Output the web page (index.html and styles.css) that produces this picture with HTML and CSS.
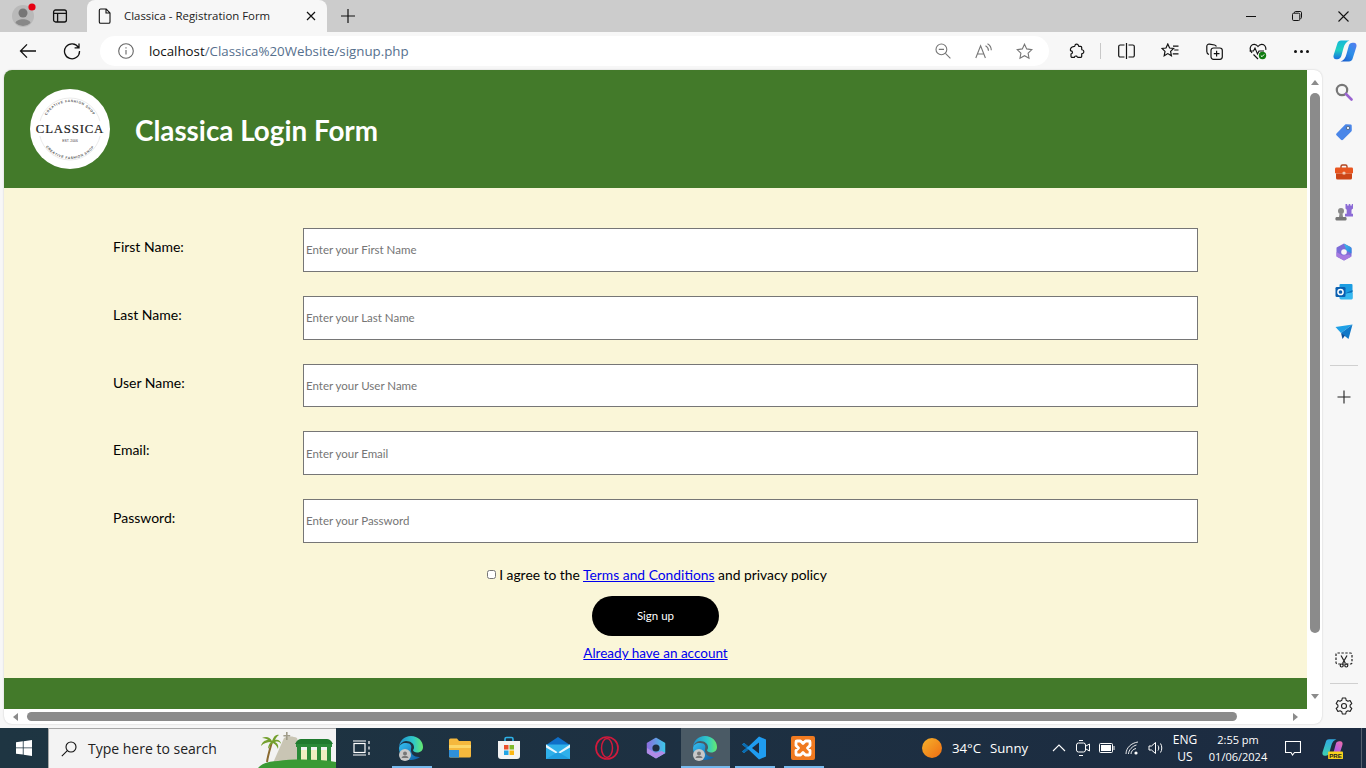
FILE: index.html
```html
<!DOCTYPE html>
<html lang="en">

<head>
  <meta charset="UTF-8" />
  <title>Classica - Registration Form</title>
  <link rel="stylesheet" href="styles.css">
</head>

<body>
  <!-- tab strip -->
  <div class="tabstrip">
    <div class="strip-btn first">
      <svg width="28" height="28" viewBox="0 0 28 28"><circle cx="14" cy="14" r="11" fill="#b9b9b9"/><circle cx="14" cy="11" r="4.5" fill="#777"/><path d="M6.5 21c1-5 14-5 15 0a11 11 0 0 1-15 0z" fill="#888"/><circle cx="23" cy="5" r="3.6" fill="#e60012"/></svg>
    </div>
    <div class="strip-btn">
      <svg width="16" height="16" viewBox="0 0 16 16" fill="none" stroke="#111" stroke-width="1.3"><rect x="1.6" y="2" width="12.8" height="12" rx="2"/><path d="M1.6 5.4h12.8M5.6 5.4V14"/></svg>
    </div>
    <div class="tab">
      <svg width="14" height="16" viewBox="0 0 14 16" fill="none" stroke="#111" stroke-width="1.1"><path d="M2.6 1h5.6L12 4.9v9a1.3 1.3 0 0 1-1.3 1.3H2.6a1.3 1.3 0 0 1-1.3-1.3V2.3A1.3 1.3 0 0 1 2.6 1zM8 1v4h4"/></svg>
      <span class="tab-title">Classica - Registration Form</span>
      <svg width="10" height="10" viewBox="0 0 10 10" stroke="#111" stroke-width="1.2"><path d="M1 1l8 8M9 1l-8 8"/></svg>
    </div>
    <div class="strip-btn plus">
      <svg width="16" height="16" viewBox="0 0 16 16" stroke="#111" stroke-width="1.2"><path d="M8 1v14M1 8h14"/></svg>
    </div>
    <div class="win-btns">
      <div class="win-btn"><svg width="10" height="10" viewBox="0 0 10 10" stroke="#111"><path d="M0 5.5h10"/></svg></div>
      <div class="win-btn"><svg width="10" height="10" viewBox="0 0 10 10" fill="none" stroke="#111"><rect x=".5" y="2.2" width="7.3" height="7.3" rx="1.2"/><path d="M2.5 2V1.5A1 1 0 0 1 3.5.5h4.8a1.2 1.2 0 0 1 1.2 1.2v4.8a1 1 0 0 1-1 1"/></svg></div>
      <div class="win-btn"><svg width="11" height="11" viewBox="0 0 11 11" stroke="#111" stroke-width="1.1"><path d="M.5.5l10 10M10.500.5l-10 10"/></svg></div>
    </div>
  </div>

  <!-- toolbar -->
  <div class="toolbar">
    <div class="tool-btn">
      <svg width="18" height="18" viewBox="0 0 18 18" fill="none" stroke="#111" stroke-width="1.3"><path d="M17 9H1.5M8 2.4L1.5 9 8 15.6"/></svg>
    </div>
    <div class="tool-btn">
      <svg width="18" height="18" viewBox="0 0 18 18" fill="none" stroke="#111" stroke-width="1.3"><path d="M15.4 5.4A7.5 7.5 0 1 0 16.5 9M16 1.5v4.4h-4.4"/></svg>
    </div>
    <div class="omnibox">
      <svg class="omni-info" width="16" height="16" viewBox="0 0 16 16" fill="none" stroke="#666" stroke-width="1.1"><circle cx="8" cy="8" r="7.3"/><path d="M8 7v4.6M8 4.2v1.2"/></svg>
      <span class="url"><b>localhost</b>/Classica%20Website/signup.php</span>
      <div class="omni-icons">
        <svg width="16" height="16" viewBox="0 0 16 16" fill="none" stroke="#777" stroke-width="1.1"><circle cx="6.4" cy="6.4" r="5.4"/><path d="M3.8 6.4h5.2M10.4 10.4l5 5"/></svg>
        <svg width="17" height="16" viewBox="0 0 17 16" fill="none" stroke="#777" stroke-width="1.1"><path d="M.8 15L5.6 2.800 10.400 15M2.500 11h6.200M10.500 2.800c1.800.9 2.900 2.700 3 4.900M12.500.8c2.300 1.300 3.700 3.700 3.800 6.400"/></svg>
        <svg width="17" height="17" viewBox="0 0 17 17" fill="none" stroke="#777" stroke-width="1.1"><path d="M8.5 1.2l2.2 4.7 5.1.7-3.7 3.5.9 5.1-4.5-2.5L4 15.2l.9-5.1L1.2 6.6l5.1-.7z"/></svg>
      </div>
    </div>
    <div class="tool-btn ext">
      <svg width="16" height="16" viewBox="0 0 16 16" fill="none" stroke="#111" stroke-width="1.2"><path d="M6 2.400C6 1 9 .6 9.400 2.400c0 .6.300 1 1 1h1.300a1 1 0 0 1 1 1v1.800c0 .6.500.8 1 .8 1.500.2 1.500 3.200 0 3.400-.5 0-1 .2-1 .8v2a1.200 1.200 0 0 1-1.200 1.200H9c-.8 0-.8-1-1.500-1.300-1-.4-2 .3-2.200 1.300H3.200A1.200 1.200 0 0 1 2 13.200V11c.8-.2 1.500-.8 1.500-1.700S2.800 7.800 1.500 7.600C1 5.500 2.500 3.800 4.500 3.600 5.400 3.500 6 3.200 6 2.400z"/></svg>
    </div>
    <div class="tool-sep"></div>
    <div class="tool-btn">
      <svg width="17" height="16" viewBox="0 0 17 16" fill="none" stroke="#111" stroke-width="1.2"><path d="M6.500 2H2.200A1.500 1.500 0 0 0 .7 3.500v9A1.500 1.500 0 0 0 2.200 14h4.300M10.500 2h4.300a1.500 1.500 0 0 1 1.500 1.500v9a1.500 1.500 0 0 1-1.500 1.500h-4.300M8.500 0v16"/></svg>
    </div>
    <div class="tool-btn">
      <svg width="18" height="16" viewBox="0 0 18 16" fill="none" stroke="#111" stroke-width="1.2"><path d="M6.800 1l1.800 4 4 .5-3 2.900.8 4.300-3.600-2.100-3.600 2.100.8-4.300-3-2.900 4-.5zM12 3.200h5.500M13.200 7h4.300M11.800 10.800h5.700"/></svg>
    </div>
    <div class="tool-btn">
      <svg width="17" height="17" viewBox="0 0 17 17" fill="none" stroke="#111" stroke-width="1.2"><path d="M3 11.500C1.500 11 .8 10 .8 8.500V3.300C.8 1.800 2 1 3.400 1.200l5.200.8c.9.200 1.500.7 1.800 1.500"/><rect x="5" y="5" width="11.300" height="11.300" rx="2.500"/><path d="M10.600 7.800v5.700M7.800 10.600h5.700"/></svg>
    </div>
    <div class="tool-btn">
      <svg width="18" height="18" viewBox="0 0 18 18" fill="none"><path d="M3 11C1 8.500.7 6 2 4c1.700-2.300 5-2 7 .5 2-2.500 5.300-2.800 7-.5.800 1.200 1 2.500.7 3.800M4.500 12.500L9 17" stroke="#111" stroke-width="1.200"/><path d="M.5 9h4l1.500-3 2.500 6 1.500-3h5" stroke="#111" stroke-width="1.100"/><circle cx="13.500" cy="13.500" r="3.700" fill="#0f7b0f"/><path d="M11.800 13.500l1.200 1.200 2.200-2.300" stroke="#fff"/></svg>
    </div>
    <div class="tool-btn more">
      <span class="dot"></span><span class="dot"></span><span class="dot"></span>
    </div>
    <div class="tool-btn last">
      <svg width="24" height="24" viewBox="0 0 24 24"><defs><linearGradient id="cpa" x1="0" y1="0" x2="0" y2="1"><stop offset="0" stop-color="#16b8d8"/><stop offset=".5" stop-color="#1fd0c0"/><stop offset="1" stop-color="#1a6fe0"/></linearGradient><linearGradient id="cpb" x1="0" y1="1" x2="1" y2="0"><stop offset="0" stop-color="#1553c8"/><stop offset=".55" stop-color="#2c8fe8"/><stop offset="1" stop-color="#5a7cf0"/></linearGradient></defs><path d="M8 1.500h8.500C13.500 2.500 11.500 5 10.500 9l-2.200 8c-.5 2-2 3.200-4 3.200H3.200C1 20.200 0 18.200.6 16.200L4.500 4C5 2.500 6.300 1.500 8 1.500z" fill="url(#cpa)"/><path d="M16 22.500H7.500c3-1 5-3.500 6-7.500l2.200-8c.5-2 2-3.200 4-3.200h1.100c2.200 0 3.200 2 2.600 4L19.500 20c-.5 1.500-1.800 2.500-3.500 2.500z" fill="url(#cpb)"/></svg>
    </div>
  </div>

  <div class="main">
    <div class="card">
      <div class="card-top">
        <!-- the page itself -->
        <div class="page">
          <div class="header">
            <svg class="logo" width="80" height="80" viewBox="0 0 80 80">
              <defs>
                <path id="arc-top" d="M13 40a27 27 0 0 1 54 0"/>
                <path id="arc-bot" d="M10 40a30 30 0 0 0 60 0"/>
              </defs>
              <circle cx="40" cy="40" r="40" fill="#fff"/>
              <circle cx="40" cy="40" r="31" fill="none" stroke="#ccc" stroke-width=".4"/>
              <text class="logo-small"><textPath href="#arc-top" startOffset="50%" text-anchor="middle">CREATIVE FASHION SHOP</textPath></text>
              <text class="logo-small"><textPath href="#arc-bot" startOffset="50%" text-anchor="middle">CREATIVE FASHION SHOP</textPath></text>
              <rect x="3" y="32" width="74" height="15" fill="#fff"/>
              <text class="logo-name" x="40" y="44" text-anchor="middle">CLASSICA</text>
              <text class="logo-est" x="40" y="53" text-anchor="middle">EST. 2006</text>
            </svg>
            <h1>Classica Login Form</h1>
          </div>

          <form class="form">
            <div class="row">
              <label for="fname">First Name:</label>
              <input type="text" id="fname" placeholder="Enter your First Name">
            </div>
            <div class="row">
              <label for="lname">Last Name:</label>
              <input type="text" id="lname" placeholder="Enter your Last Name">
            </div>
            <div class="row">
              <label for="uname">User Name:</label>
              <input type="text" id="uname" placeholder="Enter your User Name">
            </div>
            <div class="row">
              <label for="email">Email:</label>
              <input type="text" id="email" placeholder="Enter your Email">
            </div>
            <div class="row">
              <label for="pass">Password:</label>
              <input type="text" id="pass" placeholder="Enter your Password">
            </div>
            <div class="agree">
              <input type="checkbox" id="agree">
              <span>I agree to the <a href="#">Terms and Conditions</a> and privacy policy</span>
            </div>
            <button type="button" class="signup">Sign up</button>
            <a class="have" href="#">Already have an account</a>
          </form>

          <div class="footer"></div>
        </div>

        <div class="vscroll">
          <span class="arrow-up"></span>
          <div class="vthumb"></div>
          <span class="arrow-down"></span>
        </div>
      </div>
      <div class="hscroll">
        <span class="arrow-left"></span>
        <div class="hthumb"></div>
        <span class="arrow-right"></span>
      </div>
    </div>

    <!-- edge sidebar -->
    <div class="sidebar">
      <div class="side-top">
        <div class="side-btn"><svg width="18" height="18" viewBox="0 0 18 18" fill="none"><circle cx="7" cy="7" r="5.200" stroke="#777" stroke-width="2.200"/><path d="M11 11l5.500 5.500" stroke="#9a63d0" stroke-width="2.600" stroke-linecap="round"/></svg></div>
        <div class="side-btn"><svg width="18" height="18" viewBox="0 0 18 18"><path d="M1.500 10.500L10 1.800c.4-.4.800-.5 1.300-.5l4.500.2c.5 0 .9.400.9.900l.1 4.800c0 .5-.2.900-.5 1.200L8 16.700c-.6.600-1.400.6-2 0l-4.500-4.400c-.5-.5-.5-1.300 0-1.800z" fill="#4a86e8"/><circle cx="13" cy="5" r="1.700" fill="#dfe8f8" stroke="#345" stroke-width=".6"/></svg></div>
        <div class="side-btn"><svg width="18" height="16" viewBox="0 0 18 16"><path d="M6 4V2.500A1.500 1.500 0 0 1 7.500 1h3A1.500 1.500 0 0 1 12 2.500V4" fill="none" stroke="#b0431d" stroke-width="1.400"/><rect y="3.500" width="18" height="6" rx="1.200" fill="#e8551f"/><path d="M1 9.500h16V14a1.500 1.500 0 0 1-1.500 1.500h-13A1.500 1.500 0 0 1 1 14z" fill="#cc4517"/><rect x="7.600" y="7.800" width="2.800" height="2.800" rx=".6" fill="#f3c9b0"/></svg></div>
        <div class="side-btn"><svg width="18" height="18" viewBox="0 0 18 18"><circle cx="6" cy="8" r="3" fill="#8a8a8a"/><path d="M4.500 10.500h3L8 14H4z" fill="#8a8a8a"/><rect x=".5" y="14" width="11" height="3.500" rx="1.200" fill="#777"/><path d="M10.500 1h1.700v1.500h1.500V1h1.600v1.500h1.500V1h1.200v4.500l-1.500 1.300v4h1.500v2.700H10v-2.700h1.700v-4L10.500 5.500z" fill="#8c6bd6"/></svg></div>
        <div class="side-btn"><svg width="18" height="18" viewBox="0 0 18 18"><defs><linearGradient id="mb" x1="0" y1="0" x2="1" y2="1"><stop offset="0" stop-color="#39c0e8"/><stop offset="1" stop-color="#2f7fe0"/></linearGradient></defs><path d="M9 1.500l6.500 3.700v7.600L9 16.500l-6.500-3.700V5.200z" fill="#7d6cd8" stroke="#7d6cd8" stroke-width="2" stroke-linejoin="round"/><path d="M9 .8l6.500 3.200 1 1.500v5L11 7.500c0-2-1-4-2-6.700z" fill="url(#mb)"/><path d="M1.500 9l6 3.500 6.500-1 2.500 2L9 17.500 1.500 13.500z" fill="#a77be0"/><circle cx="9" cy="9" r="2.800" fill="#f7f7f7"/></svg></div>
        <div class="side-btn"><svg width="18" height="18" viewBox="0 0 18 18"><rect x="4.500" y="1" width="13" height="15" rx="1" fill="#1b9de2"/><path d="M5 10h12.500v5.500a1 1 0 0 1-1 1H6a1 1 0 0 1-1-1z" fill="#35b8f0"/><path d="M9 11l8.500-4v2z" fill="#0c6fb8"/><rect x=".5" y="4" width="10" height="10" rx="1.300" fill="#0a5fb0"/><circle cx="5.500" cy="9" r="2.600" fill="none" stroke="#fff" stroke-width="1.500"/></svg></div>
        <div class="side-btn"><svg width="18" height="16" viewBox="0 0 18 16"><path d="M.5 3L17.500.5 6 9z" fill="#1ea0e6"/><path d="M17.500.5L13.500 15 6 9z" fill="#0f78c8"/><path d="M6 9l1.500 6 2.500-3.500z" fill="#0b4f9a"/></svg></div>
        <div class="side-sep"></div>
        <div class="side-btn plus-btn"><svg width="14" height="14" viewBox="0 0 14 14" stroke="#222" stroke-width="1.100"><path d="M7 .5v13M.5 7h13"/></svg></div>
      </div>
      <div class="side-bottom">
        <div class="side-btn small"><svg width="18" height="16" viewBox="0 0 18 16" fill="none" stroke="#222" stroke-width="1.200"><rect x="1" y="1" width="16" height="11" rx="1.500" stroke-dasharray="2.400 1.500"/><path d="M6 3.500l4.500 8M12 3.500l-4.500 8"/><circle cx="6.700" cy="13.500" r="1.500"/><circle cx="11.300" cy="13.500" r="1.500"/></svg></div>
        <div class="side-sep bottom"></div>
        <div class="side-btn small"><svg width="18" height="18" viewBox="0 0 18 18" fill="none" stroke="#222" stroke-width="1.100"><path d="M7.300 1h3.400l.5 2.300 1.700 1 2.200-.7 1.700 2.900-1.700 1.600v1.800l1.700 1.600-1.700 2.900-2.200-.7-1.700 1-.5 2.300H7.300l-.5-2.300-1.700-1-2.200.7-1.700-2.900 1.700-1.600V8.100L1.200 6.500l1.700-2.900 2.200.7 1.700-1z" stroke-linejoin="round"/><circle cx="9" cy="9" r="2.500"/></svg></div>
      </div>
    </div>
  </div>

  <!-- windows taskbar -->
  <div class="taskbar">
    <div class="start">
      <svg width="16" height="16" viewBox="0 0 16 16" fill="#fff"><path d="M0 2.300l6.800-1v6.200H0zM7.600 1.200L16 0v7.500H7.600zM0 8.300h6.800v6.300L0 13.700zM7.600 8.300H16V16l-8.400-1.200z"/></svg>
    </div>
    <div class="search">
      <svg width="16" height="16" viewBox="0 0 16 16" fill="none" stroke="#111" stroke-width="1.100"><circle cx="10" cy="6" r="5"/><path d="M6.300 9.700L.8 15.200"/></svg>
      <span class="search-text">Type here to search</span>
      <svg class="search-art" width="78" height="39" viewBox="0 0 78 39">
        <path d="M15 34l11-25c4-2 9-2 13 0l7 25z" fill="#c9c5b4"/>
        <path d="M28 3h1.600v3h2.600v1.400h-2.600V11H28V7.400h-2.600V6H28z" fill="#a09c8a"/>
        <path d="M9 33c1-7 3-13 5-20" fill="none" stroke="#8a6a30" stroke-width="2"/>
        <path d="M14 12C12 8 8 7 4 9c3 0 5 1 6 2-3 0-6 2-7 6 3-3 6-4 10-4-2 2-3 4-3 7 2-3 3-5 5-6 2 1 4 3 5 6 1-4-1-6-3-7 3-1 5 0 6 2 0-3-3-5-6-4 1-2 2-4 4-5-3-1-5 1-7 6z" fill="#74a02e"/>
        <path d="M37 15c2-4 4-5 6-5h26c2 0 4 1 6 5z" fill="#1f7a2e"/>
        <path d="M38 15h36v3H38z" fill="#2a8a38"/>
        <path d="M39 18h4v17h-4zM49 18h4v17h-4zM59 18h4v17h-4zM69 18h4v17h-4z" fill="#2a8a38"/>
        <path d="M43 21h6v14h-6zM53 21h6v14h-6zM63 21h6v14h-6z" fill="#f0eec0"/>
        <path d="M0 39c4-5 12-7 20-7 14-2 40-2 58 1v6z" fill="#3a9a34"/>
      </svg>
    </div>
    <div class="task-item">
      <svg width="18" height="16" viewBox="0 0 18 16" fill="none" stroke="#fff" stroke-width="1.200"><rect x="1" y="3.500" width="11" height="9"/><path d="M0 1h13M0 15h13M16 1v3M16 6.500v3M16 12v3"/></svg>
    </div>
    <div class="task-item running">
      <svg width="26" height="26" viewBox="0 0 26 26"><defs><linearGradient id="ed" x1="0" y1="0" x2="1" y2="1"><stop offset="0" stop-color="#35c1f1"/><stop offset="1" stop-color="#0c59a4"/></linearGradient><linearGradient id="eg" x1="0" y1="0" x2="1" y2="0"><stop offset="0" stop-color="#1f8ed0"/><stop offset=".6" stop-color="#2fc8c8"/><stop offset="1" stop-color="#66eb6e"/></linearGradient></defs><path d="M1 13C1 6 6 1 13 1c7 0 12 5 12 11 0 3-2 5.500-6 5.500-2 0-4-1-4-2.500 1-1 1-2 1-3 0-3-3-6-8-6C5 6 1.500 9 1 13z" fill="url(#eg)"/><path d="M1 13c.5-3 3-5 7-5 5 0 6 3 5 6-.5 5 3 8 8 8 .6 0 1 .2.5.5C19 24 16 25 13 25 6 25 1 20 1 13z" fill="url(#ed)"/><circle cx="7" cy="20" r="6" fill="#c8c8c8"/><circle cx="7" cy="18.500" r="2" fill="#777"/><path d="M3.500 23c.5-3 6.500-3 7 0z" fill="#777"/></svg>
    </div>
    <div class="task-item">
      <svg width="24" height="22" viewBox="0 0 24 22"><path d="M1 3a1.500 1.500 0 0 1 1.500-1.500H9L11 4h11a1 1 0 0 1 1 1v14a1.500 1.500 0 0 1-1.500 1.500h-19A1.500 1.500 0 0 1 1 19z" fill="#f5b83d"/><path d="M1 8h22v3H1z" fill="#fcd768"/><path d="M1 13h10v7.500H2.500A1.500 1.500 0 0 1 1 19z" fill="#2f8fd8"/></svg>
    </div>
    <div class="task-item">
      <svg width="24" height="24" viewBox="0 0 24 24"><path d="M8 7V3a1.500 1.500 0 0 1 1.500-1.500h5A1.500 1.500 0 0 1 16 3v4" fill="none" stroke="#2eb2e8" stroke-width="1.600"/><path d="M1 5h22v15a3 3 0 0 1-3 3H4a3 3 0 0 1-3-3z" fill="#f3f3f3"/><rect x="7" y="9" width="4.500" height="4.500" fill="#ea4f2a"/><rect x="12.500" y="9" width="4.500" height="4.500" fill="#7fba2b"/><rect x="7" y="14.500" width="4.500" height="4.500" fill="#22a5e6"/><rect x="12.500" y="14.500" width="4.500" height="4.500" fill="#fbb714"/></svg>
    </div>
    <div class="task-item">
      <svg width="24" height="24" viewBox="0 0 24 24"><path d="M12 1l12 8H0z" fill="#0f6fc8"/><path d="M0 8.500h24V23H0z" fill="#2fb0ea"/><path d="M0 8.500l12 8 12-8v3l-12 7-12-7z" fill="#e8f6fd"/><path d="M0 23l12-7 12 7z" fill="#1f9ee0"/></svg>
    </div>
    <div class="task-item">
      <svg width="24" height="24" viewBox="0 0 24 24" fill="none" stroke="#d01a3c"><circle cx="12" cy="12" r="11" stroke-width="1.700"/><ellipse cx="12" cy="12" rx="5.500" ry="9.500" stroke-width="1.500"/></svg>
    </div>
    <div class="task-item">
      <svg width="20" height="22" viewBox="0 0 20 22"><defs><linearGradient id="m3" x1="0" y1="0" x2="1" y2="0"><stop offset="0" stop-color="#8a6fe0"/><stop offset="1" stop-color="#3fc4e8"/></linearGradient></defs><path d="M10 1.500l8.500 5v9l-8.500 5-8.500-5v-9z" fill="url(#m3)" stroke="url(#m3)" stroke-width="1.500" stroke-linejoin="round"/><path d="M1 11l8.500 5 6-2 4 2-9.500 5.500L1 16z" fill="#b08be6"/><circle cx="10" cy="11" r="3.600" fill="#1d2c40"/></svg>
    </div>
    <div class="task-item active running">
      <svg width="26" height="26" viewBox="0 0 26 26"><path d="M1 13C1 6 6 1 13 1c7 0 12 5 12 11 0 3-2 5.500-6 5.500-2 0-4-1-4-2.500 1-1 1-2 1-3 0-3-3-6-8-6C5 6 1.500 9 1 13z" fill="url(#eg)"/><path d="M1 13c.5-3 3-5 7-5 5 0 6 3 5 6-.5 5 3 8 8 8 .6 0 1 .2.5.5C19 24 16 25 13 25 6 25 1 20 1 13z" fill="url(#ed)"/><circle cx="7" cy="20" r="6" fill="#c8c8c8"/><circle cx="7" cy="18.500" r="2" fill="#777"/><path d="M3.500 23c.5-3 6.500-3 7 0z" fill="#777"/></svg>
    </div>
    <div class="task-item running">
      <svg width="24" height="24" viewBox="0 0 24 24"><path d="M17 .5L24 3.500v17L17 23.500 6.500 13.500 2 17 0 15.500 4.500 12 0 8.500 2 7l4.500 3.500z" fill="#1f9cf0"/><path d="M17 6.500L10 12l7 5.500z" fill="#1d2c40"/><path d="M0 8.500L2 7l4.500 3.500L4.500 12zM0 15.500L4.500 12l2 1.500L2 17z" fill="#0a6cb0"/></svg>
    </div>
    <div class="task-item running">
      <svg width="24" height="24" viewBox="0 0 24 24"><rect width="24" height="24" rx="2" fill="#f07a20"/><path d="M6 5h3.500l2.500 2.500L14.500 5H18a1 1 0 0 1 1 1v3.500L16.500 12l2.500 2.500V18a1 1 0 0 1-1 1h-3.500L12 16.500 9.500 19H6a1 1 0 0 1-1-1v-3.500L7.500 12 5 9.500V6a1 1 0 0 1 1-1z" fill="none" stroke="#fff" stroke-width="2.800" stroke-linejoin="round"/></svg>
    </div>

    <div class="weather">
      <span class="sun"></span>
      <span class="temp">34°C</span>
      <span>Sunny</span>
    </div>
    <div class="tray">
      <svg width="14" height="8" viewBox="0 0 14 8" fill="none" stroke="#fff" stroke-width="1.100"><path d="M1 7l6-6 6 6"/></svg>
      <svg width="14" height="18" viewBox="0 0 14 18" fill="none" stroke="#fff"><rect x=".5" y="4" width="9" height="9" rx="2"/><path d="M10 7l3.500-2v7L10 10M3 1.500h4M3 16.500h4"/></svg>
      <svg width="16" height="10" viewBox="0 0 16 10" fill="none" stroke="#fff"><rect x=".5" y=".5" width="13" height="9" rx="1"/><rect x="2" y="2" width="10" height="6" fill="#fff" stroke="none"/><path d="M15 3v4"/></svg>
      <svg width="14" height="14" viewBox="0 0 14 14" fill="none" stroke="#fff" stroke-width=".9"><path d="M1 13C1 7 6 2 13 1M3.500 13c0-4 4-8 8-9M6 13c0-2.500 2-5 5-5.500"/><circle cx="11" cy="12" r="1.600" fill="#fff" stroke="none"/></svg>
      <svg width="16" height="14" viewBox="0 0 16 14" fill="none" stroke="#fff"><path d="M1 5h2.500L7.500 1.500v11L3.500 9H1zM10 4.500c1 1.500 1 3.500 0 5M12.500 2.500c1.700 2.500 1.700 6.500 0 9"/></svg>
    </div>
    <div class="lang"><span>ENG</span><span>US</span></div>
    <div class="clock"><span>2:55 pm</span><span>01/06/2024</span></div>
    <div class="notify">
      <svg width="16" height="15" viewBox="0 0 16 15" fill="none" stroke="#fff" stroke-width="1.100"><path d="M.5.5h15v11H9.500L7.500 14l-1.500-2.500H.5z"/></svg>
    </div>
    <div class="tb-copilot">
      <svg width="21" height="21" viewBox="0 0 24 24"><defs><linearGradient id="tca" x1="0" y1="0" x2="0" y2="1"><stop offset="0" stop-color="#2fa8e0"/><stop offset="1" stop-color="#3fd0b0"/></linearGradient><linearGradient id="tcb" x1="0" y1="1" x2="1" y2="0"><stop offset="0" stop-color="#6d5ce8"/><stop offset=".6" stop-color="#c05fd8"/><stop offset="1" stop-color="#f06fa8"/></linearGradient></defs><path d="M8 1.500h8.500C13.500 2.500 11.500 5 10.500 9l-2.200 8c-.5 2-2 3.200-4 3.200H3.200C1 20.200 0 18.200.6 16.200L4.500 4C5 2.500 6.300 1.500 8 1.500z" fill="url(#tca)"/><path d="M16 22.500H7.500c3-1 5-3.500 6-7.500l2.200-8c.5-2 2-3.200 4-3.200h1.100c2.200 0 3.200 2 2.600 4L19.500 20c-.5 1.500-1.800 2.500-3.500 2.500z" fill="url(#tcb)"/><rect x="7" y="15.500" width="17" height="8.500" rx="1" fill="#f7d21c"/><text class="pre-text" x="15.500" y="22.300" text-anchor="middle">PRE</text></svg>
    </div>
    <div class="desk-line"></div>
  </div>
</body>

</html>
```

FILE: styles.css
```css
* {
  padding: 0;
  margin: 0;
  box-sizing: border-box;
}

html,
body {
  width: 1366px;
  height: 768px;
  overflow: hidden;
}

body {
  background: #f7f7f7;
  font-family: "Open Sans", "Noto Sans", sans-serif;
}

/* tab strip */
.tabstrip {
  height: 32px;
  background: #cccccc;
  display: flex;
  align-items: center;
}

.strip-btn {
  width: 38px;
  height: 32px;
  display: flex;
  align-items: center;
  justify-content: center;
}

.strip-btn.first {
  width: 41px;
  padding-left: 4px;
}

.tab {
  width: 240px;
  height: 32px;
  margin-left: 8px;
  padding: 0 11px;
  background: #f7f7f7;
  border-radius: 8px 8px 0 0;
  display: flex;
  align-items: center;
}

.tab-title {
  flex: 1;
  margin-left: 12px;
  margin-top: -1px;
  font-size: 11.4px;
  color: #222;
}

.strip-btn.plus {
  width: 42px;
}

.win-btns {
  margin-left: auto;
  display: flex;
}

.win-btn {
  width: 46px;
  height: 32px;
  display: flex;
  align-items: center;
  justify-content: center;
}

/* toolbar */
.toolbar {
  height: 38px;
  padding-left: 6px;
  background: #f7f7f7;
  display: flex;
  align-items: center;
}

.tool-btn {
  width: 44px;
  height: 34px;
  display: flex;
  align-items: center;
  justify-content: center;
}

.tool-btn.ext {
  margin-left: 6px;
}

.tool-btn.more {
  width: 43px;
  gap: 3px;
}

.tool-btn.last {
  width: 43px;
}

.dot {
  width: 3px;
  height: 3px;
  border-radius: 50%;
  background: #111;
}

.tool-sep {
  width: 1px;
  height: 16px;
  margin: 0 3px 0 1px;
  background: #c8c8c8;
}

.omnibox {
  width: 949px;
  height: 30px;
  margin-left: 6px;
  padding: 0 16px 0 18px;
  background: #fff;
  border-radius: 15px;
  display: flex;
  align-items: center;
}

.url {
  margin-left: 15px;
  font-size: 13.3px;
  color: #56708e;
}

.url b {
  font-weight: 400;
  color: #111;
}

.omni-icons {
  margin-left: auto;
  display: flex;
  align-items: center;
  gap: 24px;
}

/* browser content */
.main {
  height: 658px;
  padding: 0 0 4px 4px;
  display: flex;
}

.card {
  width: 1318px;
  background: #fff;
  border-radius: 8px;
  overflow: hidden;
  display: flex;
  flex-direction: column;
  box-shadow: 0 0 2px rgba(0, 0, 0, 0.2);
}

.card-top {
  height: 639px;
  display: flex;
}

.page {
  width: 1303px;
  display: flex;
  flex-direction: column;
  font-family: "Comic Sans MS", "Lato", sans-serif;
}

.header {
  height: 118px;
  padding-left: 26px;
  background: #437a2a;
  display: flex;
  align-items: center;
}

.header h1 {
  margin-left: 25px;
  margin-top: 2px;
  font-size: 27.8px;
  font-weight: bold;
  color: #fff;
}

.logo-small {
  font-family: "Liberation Sans", sans-serif;
  font-size: 3.4px;
  font-weight: bold;
  letter-spacing: 0.6px;
  fill: #555;
}

.logo-name {
  font-family: "Liberation Serif", serif;
  font-size: 12.8px;
  letter-spacing: 0.8px;
  fill: #222;
  stroke: #222;
  stroke-width: 0.2;
}

.logo-est {
  font-family: "Liberation Sans", sans-serif;
  font-size: 3.4px;
  fill: #444;
}

.form {
  flex: 1;
  padding-top: 40px;
  background: #faf6d8;
  display: flex;
  flex-direction: column;
  align-items: center;
}

.row {
  width: 1085px;
  height: 43.75px;
  margin-bottom: 24px;
  display: flex;
}

.row label {
  width: 190px;
  padding-top: 10px;
  font-size: 14px;
  color: #000;
}

.row input {
  width: 895px;
  height: 100%;
  padding: 2px;
  background: #fff;
  border: 1px solid #767676;
  font-family: inherit;
  font-size: 11.5px;
}

.row input::placeholder {
  color: #757575;
}

.agree {
  margin-top: -1px;
  margin-left: 3px;
  display: flex;
  align-items: center;
  font-size: 13.85px;
}

.agree input {
  width: 9px;
  height: 9px;
  margin-right: 3px;
}

.signup {
  width: 127px;
  height: 40px;
  margin-top: 13px;
  background: #000;
  border: 0;
  border-radius: 20px;
  color: #fff;
  font-family: inherit;
  font-size: 11.5px;
}

.have {
  margin-top: 9px;
  font-size: 13.5px;
}

.footer {
  height: 31px;
  background: #437a2a;
}

/* scrollbars */
.vscroll {
  width: 15px;
  padding: 10px 2px 10px 3px;
  display: flex;
  flex-direction: column;
  align-items: center;
}

.vthumb {
  width: 10px;
  height: 540px;
  margin: 8px 0 auto;
  background: #8b8b8b;
  border-radius: 5px;
}

.arrow-up {
  border: 4px solid transparent;
  border-top: 0;
  border-bottom: 5px solid #8b8b8b;
}

.arrow-down {
  border: 4px solid transparent;
  border-bottom: 0;
  border-top: 5px solid #8b8b8b;
}

.hscroll {
  height: 15px;
  padding: 0 24px 0 9px;
  display: flex;
  align-items: center;
}

.hthumb {
  width: 1210px;
  height: 9px;
  margin: 0 auto 0 9px;
  background: #8b8b8b;
  border-radius: 5px;
}

.arrow-left {
  border: 4px solid transparent;
  border-left: 0;
  border-right: 5px solid #8b8b8b;
}

.arrow-right {
  border: 4px solid transparent;
  border-right: 0;
  border-left: 5px solid #8b8b8b;
}

/* sidebar */
.sidebar {
  width: 44px;
  display: flex;
  flex-direction: column;
  justify-content: space-between;
  padding: 2px 0 1px;
}

.side-btn {
  height: 40px;
  display: flex;
  align-items: center;
  justify-content: center;
}

.side-btn.plus-btn {
  height: 32px;
}

.side-btn.small {
  height: 34px;
}

.side-sep {
  height: 1px;
  width: 28px;
  margin: 13px auto 15px;
  background: #d0d0d0;
}

.side-sep.bottom {
  margin: 6px auto 5px;
}

/* taskbar */
.taskbar {
  height: 40px;
  background: linear-gradient(90deg, #1e3542, #1c2b41);
  display: flex;
  align-items: center;
  color: #fff;
}

.start {
  width: 48px;
  display: flex;
  justify-content: center;
}

.search {
  width: 288px;
  height: 40px;
  margin-right: 1.5px;
  padding-left: 12px;
  background: #f3f3f3;
  border: 1px solid #a8a8a8;
  border-bottom: 0;
  border-right: 0;
  display: flex;
  align-items: center;
  overflow: hidden;
}

.search-text {
  margin-left: 11px;
  font-size: 14px;
  color: #222;
}

.search-art {
  margin-left: auto;
  align-self: flex-end;
}

.task-item {
  position: relative;
  width: 49px;
  height: 40px;
  display: flex;
  align-items: center;
  justify-content: center;
}

.task-item.active {
  background: #4a5a65;
}

.task-item.running::after {
  content: "";
  position: absolute;
  left: 5px;
  right: 4px;
  bottom: 0;
  height: 2px;
  background: #76b9ed;
}

.task-item.active::after {
  left: 0;
  right: 0;
}

.weather {
  width: 128px;
  margin-left: 94.5px;
  display: flex;
  align-items: center;
  font-size: 13.2px;
}

.sun {
  width: 20px;
  height: 20px;
  border-radius: 50%;
  background: linear-gradient(135deg, #f6b32c, #ef6c12);
}

.temp {
  margin: 0 9px 0 10px;
}

.tray {
  width: 112px;
  margin-left: 2px;
  display: flex;
  align-items: center;
  justify-content: space-between;
}

.lang,
.clock {
  display: flex;
  flex-direction: column;
  align-items: center;
  font-size: 12px;
  line-height: 17px;
}

.lang {
  width: 30px;
  margin-left: 6px;
}

.clock {
  width: 66px;
  margin-left: 5px;
  font-size: 11px;
}

.notify {
  margin-left: 14px;
  width: 16px;
  display: flex;
}

.tb-copilot {
  margin-left: 21px;
  display: flex;
}

.desk-line {
  width: 1px;
  height: 40px;
  margin-left: auto;
  margin-right: 4px;
  background: #55606e;
}

.pre-text {
  font-family: "Liberation Sans", sans-serif;
  font-size: 7px;
  font-weight: bold;
  fill: #222;
}
```
